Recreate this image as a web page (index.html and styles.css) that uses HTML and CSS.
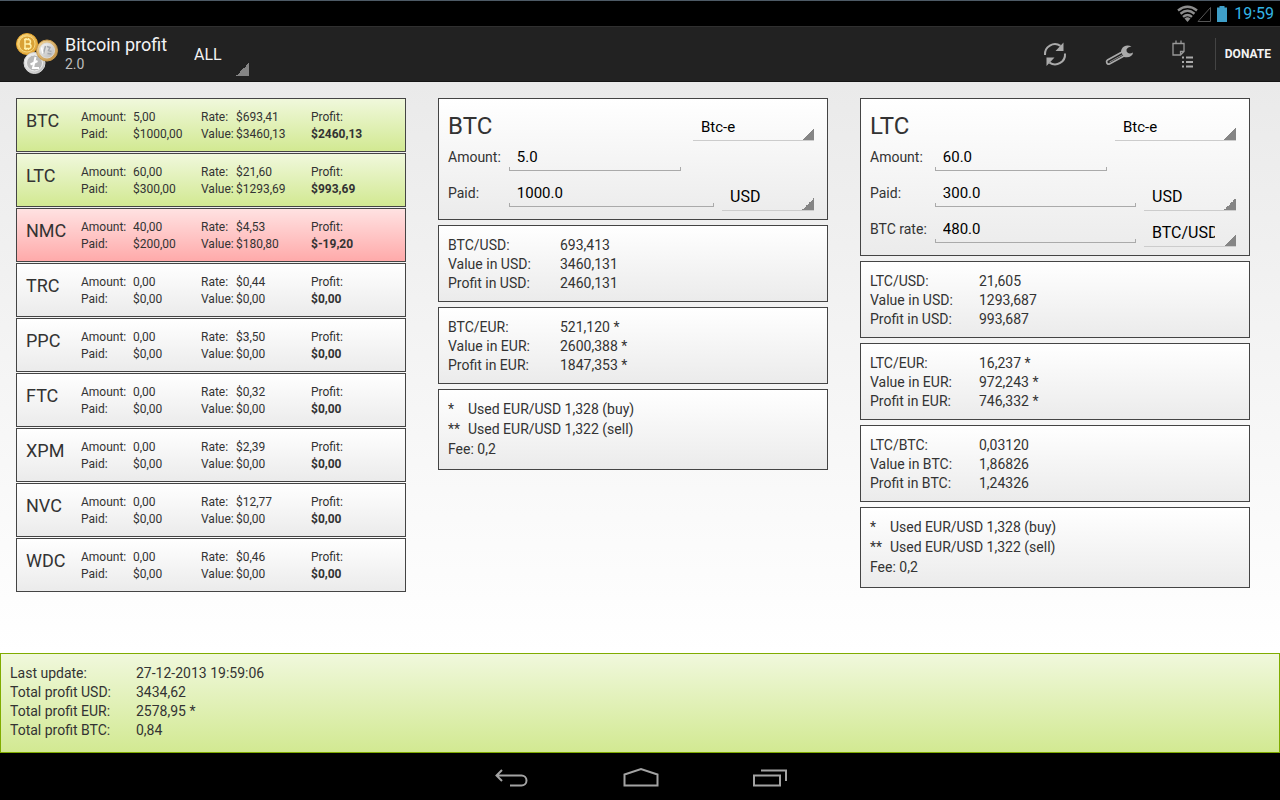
FILE: index.html
```html
<!DOCTYPE html>
<html lang="en">
<head>
    <meta charset="UTF-8">
    <meta name="viewport" content="width=device-width, initial-scale=1.0">
    <title>Bitcoin profit</title>
    <link rel="stylesheet" href="styles.css">
</head>
<body>
    <div class="status-bar">
        <svg class="status-icons" width="52" height="18" viewBox="0 0 52 18">
            <g fill="none" stroke="#8c8c8c" stroke-width="2.400">
                <path d="M1 5.500Q10.500 -2 20 5.500"/>
                <path d="M3.500 8.700Q10.500 3 17.500 8.700"/>
                <path d="M6 11.800Q10.500 8 15 11.800"/>
            </g>
            <path d="M7.500 13.500Q10.500 11 13.500 13.500L10.500 17z" fill="#8c8c8c"/>
            <path d="M21 16.500H33.500V2.500z" fill="none" stroke="#555"/>
            <path d="M40 2.500h2.500V1h5v1.500H50V17H40z" fill="#3f9fc8"/>
        </svg>
        <span class="clock">19:59</span>
    </div>

    <header class="action-bar">
        <svg class="logo" width="42" height="42" viewBox="0 0 42 42">
            <defs>
                <linearGradient id="gold" x1="0" y1="0" x2="1" y2="1">
                    <stop offset="0" stop-color="#ffe08a"/>
                    <stop offset="1" stop-color="#d99a2c"/>
                </linearGradient>
                <linearGradient id="rim" x1="0" y1="0" x2="1" y2="1">
                    <stop offset="0" stop-color="#f5dca8"/>
                    <stop offset="1" stop-color="#bd8a3c"/>
                </linearGradient>
                <linearGradient id="silver" x1="0" y1="0" x2="1" y2="1">
                    <stop offset="0" stop-color="#fafafa"/>
                    <stop offset="1" stop-color="#b5b5b5"/>
                </linearGradient>
            </defs>
            <circle cx="11" cy="11" r="10.500" fill="url(#gold)" stroke="#e5a52c"/>
            <circle cx="11" cy="11" r="8" fill="#d9a136" stroke="#f6d67c"/>
            <path d="M9 6.500v9M8 6.500h4q2.500 0 2.500 2.200T12 11H9h3.500q2.500 0 2.500 2.300t-2.500 2.200H8M10 5v1.500M12.500 5v1.500M10 15.500V17M12.500 15.500V17" fill="none" stroke="#fff0a8" stroke-width="1.500"/>
            <circle cx="18.500" cy="30" r="10.500" fill="url(#silver)" stroke="#d6d6d6"/>
            <circle cx="18.500" cy="30" r="8" fill="#b8b8b8" stroke="#ececec"/>
            <path d="M19.500 24l-2.500 11h6M14.500 31.500l7-3.500" fill="none" stroke="#fff" stroke-width="2"/>
            <circle cx="31" cy="17.500" r="10.500" fill="url(#rim)" stroke="#c99a4a"/>
            <circle cx="31" cy="17.500" r="7.500" fill="url(#silver)" stroke="#dcdcdc"/>
            <path d="M27.500 20.500l2-7.500M31 13.500l3 1-1.500 3 3 1M31.500 20.500l4 .5" fill="none" stroke="#a3a6ab" stroke-width="1.500"/>
            <path d="M25.500 14.500l1.500 6" stroke="#fff" stroke-width="1.500"/>
        </svg>
        <div class="titles">
            <h1>Bitcoin profit</h1>
            <p>2.0</p>
        </div>
        <select class="spinner view-spinner" aria-label="View">
            <option>ALL</option>
        </select>
        <div class="actions">
            <button class="action" aria-label="Refresh">
                <svg width="32" height="32" viewBox="0 0 32 32">
                    <g fill="none" stroke="#aaa" stroke-width="2">
                        <path d="M6 17A10 10 0 0 1 21.500 7.800"/>
                        <path d="M26 15.500A10 10 0 0 1 10.500 24.700"/>
                    </g>
                    <path d="M24.500 4.500v8.500h-8zM7.500 28v-8.500h8z" fill="#aaa"/>
                </svg>
            </button>
            <button class="action" aria-label="Settings">
                <svg width="32" height="32" viewBox="0 0 32 32">
                    <path d="M19 14L4.500 22q-1.500 1-.7 2.800t2.700 1.200L21 18" fill="none" stroke="#aaa" stroke-width="1.700"/>
                    <path d="M6.500 24L20 16.500" stroke="#888" stroke-width="1"/>
                    <path d="M28.500 8.500q-4-2-7.500 0-3 2-3 5.500l3 5q4.500 1 7-1 2-1.500 2-3.500-3 1.500-5 .5-2-1.500-1.500-3.500 1-2.500 5-3z" fill="#aaa"/>
                </svg>
            </button>
            <button class="action" aria-label="Notes">
                <svg width="32" height="32" viewBox="0 0 32 32">
                    <path d="M6 5.500h11v8l-3.500 3.500H6zM9 2.500v3M14 2.500v3M17 13.500h-3.500V17" fill="none" stroke="#999" stroke-width="1.300"/>
                    <path d="M15 19.500h2M15 24h2M15 28.500h2M19 19.500h7M19 24h7M19 28.500h7" stroke="#aaa" stroke-width="2"/>
                </svg>
            </button>
            <button class="donate">DONATE</button>
        </div>
    </header>

    <main class="content">
        <ul class="coins" id="coins"></ul>

        <section class="detail">
            <form class="card form">
                <div class="form-head">
                    <h2>BTC</h2>
                    <select class="spinner exchange" aria-label="Exchange">
                        <option>Btc-e</option>
                    </select>
                </div>
                <div class="fields">
                    <label for="btcAmount">Amount:</label>
                    <input class="short" type="text" id="btcAmount" value="5.0">
                    <label for="btcPaid">Paid:</label>
                    <input type="text" id="btcPaid" value="1000.0">
                    <select class="spinner" aria-label="Currency">
                        <option>USD</option>
                    </select>
                </div>
            </form>
            <table class="card info">
                <tr><th scope="row">BTC/USD:</th><td>693,413</td></tr>
                <tr><th scope="row">Value in USD:</th><td>3460,131</td></tr>
                <tr><th scope="row">Profit in USD:</th><td>2460,131</td></tr>
            </table>
            <table class="card info">
                <tr><th scope="row">BTC/EUR:</th><td>521,120 *</td></tr>
                <tr><th scope="row">Value in EUR:</th><td>2600,388 *</td></tr>
                <tr><th scope="row">Profit in EUR:</th><td>1847,353 *</td></tr>
            </table>
            <div class="card notes">
                <p><span class="mark">*</span>Used EUR/USD 1,328 (buy)</p>
                <p><span class="mark">**</span>Used EUR/USD 1,322 (sell)</p>
                <p>Fee: 0,2</p>
            </div>
        </section>

        <section class="detail alt">
            <form class="card form">
                <div class="form-head">
                    <h2>LTC</h2>
                    <select class="spinner exchange" aria-label="Exchange">
                        <option>Btc-e</option>
                    </select>
                </div>
                <div class="fields">
                    <label for="ltcAmount">Amount:</label>
                    <input class="short" type="text" id="ltcAmount" value="60.0">
                    <label for="ltcPaid">Paid:</label>
                    <input type="text" id="ltcPaid" value="300.0">
                    <select class="spinner" aria-label="Currency">
                        <option>USD</option>
                    </select>
                    <label for="ltcRate">BTC rate:</label>
                    <input type="text" id="ltcRate" value="480.0">
                    <select class="spinner" aria-label="Rate currency">
                        <option>BTC/USD</option>
                    </select>
                </div>
            </form>
            <table class="card info">
                <tr><th scope="row">LTC/USD:</th><td>21,605</td></tr>
                <tr><th scope="row">Value in USD:</th><td>1293,687</td></tr>
                <tr><th scope="row">Profit in USD:</th><td>993,687</td></tr>
            </table>
            <table class="card info">
                <tr><th scope="row">LTC/EUR:</th><td>16,237 *</td></tr>
                <tr><th scope="row">Value in EUR:</th><td>972,243 *</td></tr>
                <tr><th scope="row">Profit in EUR:</th><td>746,332 *</td></tr>
            </table>
            <table class="card info">
                <tr><th scope="row">LTC/BTC:</th><td>0,03120</td></tr>
                <tr><th scope="row">Value in BTC:</th><td>1,86826</td></tr>
                <tr><th scope="row">Profit in BTC:</th><td>1,24326</td></tr>
            </table>
            <div class="card notes">
                <p><span class="mark">*</span>Used EUR/USD 1,328 (buy)</p>
                <p><span class="mark">**</span>Used EUR/USD 1,322 (sell)</p>
                <p>Fee: 0,2</p>
            </div>
        </section>
    </main>

    <footer class="totals">
        <table>
            <tr><th scope="row">Last update:</th><td>27-12-2013 19:59:06</td></tr>
            <tr><th scope="row">Total profit USD:</th><td>3434,62</td></tr>
            <tr><th scope="row">Total profit EUR:</th><td>2578,95 *</td></tr>
            <tr><th scope="row">Total profit BTC:</th><td>0,84</td></tr>
        </table>
    </footer>

    <nav class="nav-bar">
        <button aria-label="Back">
            <svg width="36" height="22" viewBox="0 0 36 22">
                <path d="M8 3L2.500 8.500L8 14M3 8.500H27.500a5 5 0 0 1 0 10H16" fill="none" stroke="#a3a3a3" stroke-width="2"/>
            </svg>
        </button>
        <button aria-label="Home">
            <svg width="36" height="22" viewBox="0 0 36 22">
                <path d="M1.500 18.500V7.500L18 2L34.500 7.500V18.500z" fill="none" stroke="#a3a3a3" stroke-width="2"/>
            </svg>
        </button>
        <button aria-label="Recent apps">
            <svg width="36" height="22" viewBox="0 0 36 22">
                <path d="M2 8.500H28V18.500H2zM9 3.500H34V14" fill="none" stroke="#a3a3a3" stroke-width="2"/>
            </svg>
        </button>
    </nav>

    <script>
        const coins = [
            { name: 'BTC', amount: '5,00', paid: '1000,00', rate: '693,41', value: '3460,13', profit: '2460,13', type: 'gain' },
            { name: 'LTC', amount: '60,00', paid: '300,00', rate: '21,60', value: '1293,69', profit: '993,69', type: 'gain' },
            { name: 'NMC', amount: '40,00', paid: '200,00', rate: '4,53', value: '180,80', profit: '-19,20', type: 'loss' },
            { name: 'TRC', amount: '0,00', paid: '0,00', rate: '0,44', value: '0,00', profit: '0,00', type: '' },
            { name: 'PPC', amount: '0,00', paid: '0,00', rate: '3,50', value: '0,00', profit: '0,00', type: '' },
            { name: 'FTC', amount: '0,00', paid: '0,00', rate: '0,32', value: '0,00', profit: '0,00', type: '' },
            { name: 'XPM', amount: '0,00', paid: '0,00', rate: '2,39', value: '0,00', profit: '0,00', type: '' },
            { name: 'NVC', amount: '0,00', paid: '0,00', rate: '12,77', value: '0,00', profit: '0,00', type: '' },
            { name: 'WDC', amount: '0,00', paid: '0,00', rate: '0,46', value: '0,00', profit: '0,00', type: '' }
        ];

        document.getElementById('coins').innerHTML = coins.map(c => `
            <li class="card coin ${c.type}">
                <span class="name">${c.name}</span>
                <span>Amount:</span><span>${c.amount}</span>
                <span>Rate:</span><span>$${c.rate}</span>
                <span>Profit:</span>
                <span>Paid:</span><span>$${c.paid}</span>
                <span>Value:</span><span>$${c.value}</span>
                <strong>$${c.profit}</strong>
            </li>`).join('');
    </script>
</body>
</html>
```

FILE: styles.css
```css
* { box-sizing: border-box; }
body { margin: 0; min-height: 100vh; display: flex; flex-direction: column; background: #000; color: #333; font-family: Roboto, sans-serif; font-size: 14px; }
h1, h2, p, ul { margin: 0; padding: 0; font-weight: 400; }
button { padding: 0; border: none; background: none; color: inherit; font-family: inherit; cursor: pointer; }
table { border-spacing: 0; }
th, td { padding: 0; font-weight: 400; text-align: left; }

.status-bar { height: 26px; display: flex; align-items: center; justify-content: flex-end; gap: 5px; padding-right: 6px; border-top: 1px solid #4d5a66; }
.clock { color: #33b5e5; font-size: 16px; }

.action-bar { height: 56px; display: flex; align-items: center; padding-left: 16px; background: #222; border-top: 1px solid #303030; border-bottom: 1px solid #151515; color: #f3f3f3; }
.titles { margin-left: 7px; width: 121px; }
.titles h1 { font-size: 18px; line-height: 20px; }
.titles p { font-size: 14px; line-height: 18px; color: #bebebe; }
.actions { margin-left: auto; display: flex; align-items: center; }
.action { width: 64px; height: 48px; }
.action svg { display: block; margin: auto; }
.donate { height: 32px; padding: 0 9px; border-left: 1px solid #444; font-size: 12px; font-weight: 700; }

.spinner { appearance: none; width: 100%; height: 34px; padding: 6px 21px 0 8px; border: none; border-bottom: 1px solid #ccc; border-radius: 0; outline: none; color: #000; font-family: inherit; font-size: 16px; background: linear-gradient(to bottom right, transparent 50%, #858585 50%) right bottom / 13px 13px no-repeat border-box; }
.view-spinner { width: 63px; height: 44px; padding: 0 0 0 8px; border-bottom: none; color: #f3f3f3; }

.content { flex: 1; display: grid; grid-template-columns: repeat(3, 1fr); gap: 32px; align-items: start; padding: 16px 30px 16px 16px; background: linear-gradient(#eaeaea, #fff); }
.card { border: 1px solid #444; background: linear-gradient(#fff, #ebebeb); }
.gain { background: linear-gradient(#f0f8dc, #d2e992); }
.loss { background: linear-gradient(#ffe2e2, #ffaaaa); }

.coins { display: flex; flex-direction: column; gap: 1px; list-style: none; }
.coin { display: grid; grid-template-columns: 55px 52px 68px 35px 75px 1fr; padding: 10px 9px 8px; font-size: 12px; line-height: 17px; }
.coin .name { grid-row: span 2; font-size: 18px; line-height: 24px; }

.detail { display: flex; flex-direction: column; gap: 5px; }
.form { padding: 0 13px 6px 9px; }
.form-head { height: 42px; display: flex; align-items: flex-end; justify-content: space-between; }
.form-head h2 { font-size: 24px; line-height: 30px; }
.form-head .exchange { width: 121px; font-size: 15px; }
.fields { display: grid; grid-template-columns: auto 1fr 92px; grid-auto-rows: 36px; column-gap: 8px; }
.fields label { grid-column: 1; line-height: 32px; }
.fields input { width: 100%; height: 30px; padding: 2px 8px 0; border: none; border-radius: 0; outline: none; color: #000; font-family: inherit; font-size: 15px; background: linear-gradient(#aaa, #aaa) left bottom / 100% 1px no-repeat, linear-gradient(#aaa, #aaa) left bottom / 1px 4px no-repeat, linear-gradient(#aaa, #aaa) right bottom / 1px 4px no-repeat; }
.fields .short { width: 172px; }

.info { width: 100%; padding: 10px 9px 8px; line-height: 19px; }
.info th { width: 112px; }
.alt .info th { width: 109px; }
.notes { padding: 9px 9px 10px; line-height: 20px; }
.mark { display: inline-block; width: 20px; }

.totals { padding: 10px 9px 12px; border: 1px solid #80ac00; background: linear-gradient(#f0f8dc, #d2e992); line-height: 19px; }
.totals th { width: 126px; }

.nav-bar { height: 47px; display: flex; justify-content: center; align-items: center; gap: 93px; padding: 2px 0 0 1px; }
.nav-bar svg { display: block; }
```
